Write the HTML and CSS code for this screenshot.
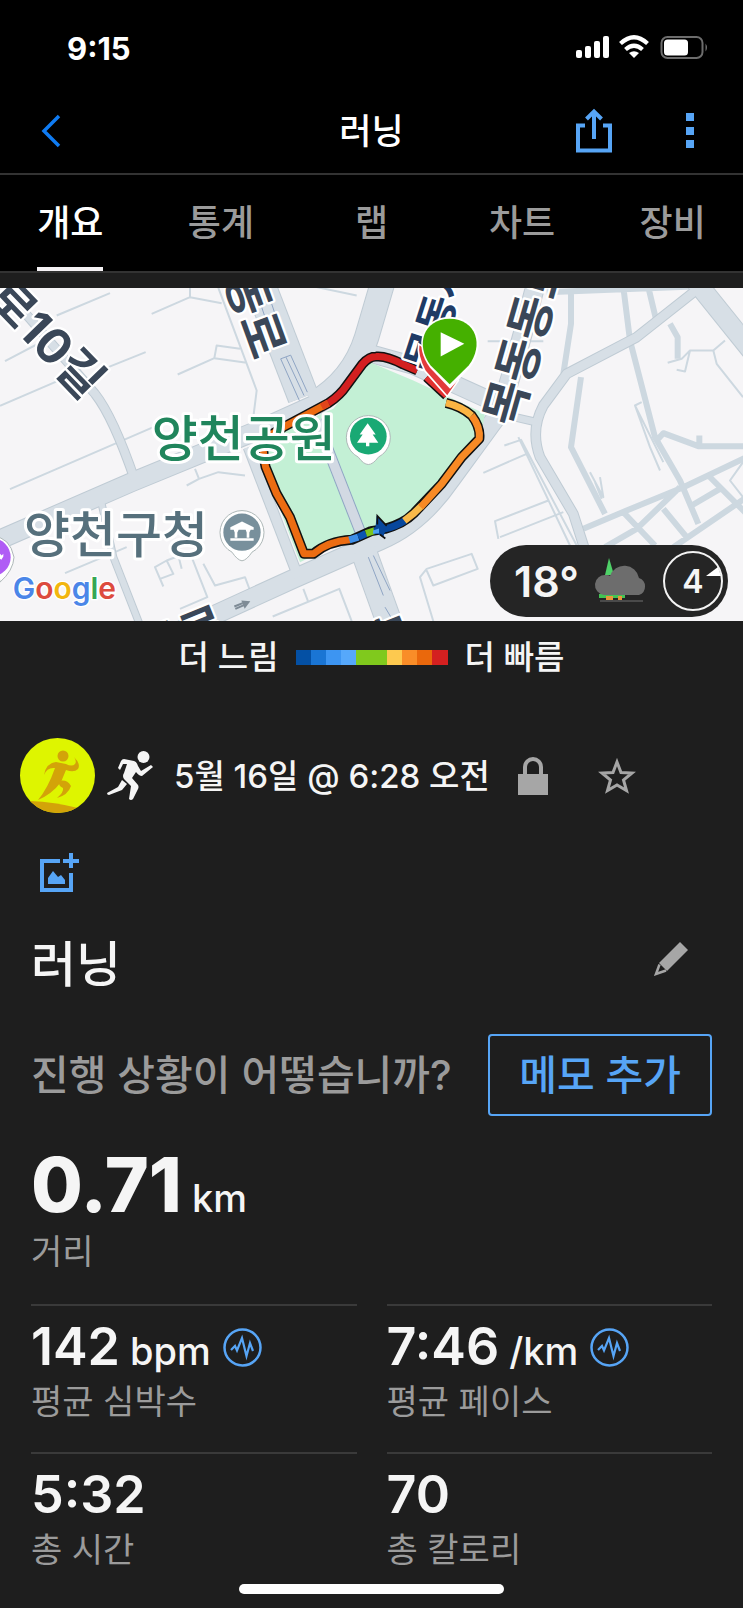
FILE: index.html
```html
<!DOCTYPE html>
<html lang="ko">
<head>
<meta charset="utf-8">
<meta name="viewport" content="width=device-width, initial-scale=1">
<title>러닝</title>
<link rel="stylesheet" href="styles.css">
</head>
<body>
<header class="top">
  <div class="status">
    <span class="clock">9:15</span>
    <svg class="status-icons" viewBox="0 0 134 26" width="134" height="26" aria-hidden="true">
      <g fill="#fff">
        <rect x="1" y="15" width="6" height="8" rx="2"/><rect x="10" y="11" width="6" height="12" rx="2"/>
        <rect x="19" y="6" width="6" height="17" rx="2"/><rect x="28" y="1" width="6" height="22" rx="2"/>
        <path d="M59 23l-5-5q5-3.500 10 0z"/>
      </g>
      <g fill="none" stroke="#fff" stroke-width="4.200">
        <path d="M45.500 8.500Q59-4 72.500 8.500"/><path d="M50.500 14.500q8.500-7.500 17 0"/>
      </g>
      <rect x="86.500" y="2" width="41" height="21" rx="6" fill="none" stroke="#6d6d6d" stroke-width="2"/>
      <rect x="89" y="4.500" width="24" height="16" rx="3.500" fill="#fff"/>
      <path d="M130.500 8.500q3 4 0 8z" fill="#6d6d6d"/>
    </svg>
  </div>
  <nav class="bar">
    <button class="icon-btn" aria-label="뒤로"><svg viewBox="0 0 22 34" width="22" height="34"><path d="M19 2L4 17l15 15" fill="none" stroke="#0f7bf2" stroke-width="3.500"/></svg></button>
    <h1 class="bar-title">러닝</h1>
    <div class="bar-actions">
      <button class="icon-btn" aria-label="공유"><svg viewBox="0 0 36 45" width="36" height="45"><g fill="none" stroke="#57a5f6" stroke-width="4"><path d="M9 17.500H2V42.500H34V17.500H27M18 31V3"/><path d="M10.500 11L18 3.500 25.500 11"/></g></svg></button>
      <button class="icon-btn" aria-label="더 보기"><svg viewBox="0 0 8 36" width="8" height="36"><path d="M0 0h8v8H0zM0 14h8v8H0zM0 27h8v8H0z" fill="#57a5f6"/></svg></button>
    </div>
  </nav>
  <nav class="tabs">
    <a class="tab is-active" href="#overview" aria-current="page">개요</a>
    <a class="tab" href="#stats">통계</a>
    <a class="tab" href="#laps">랩</a>
    <a class="tab" href="#charts">차트</a>
    <a class="tab" href="#gear">장비</a>
  </nav>
</header>

<main>
  <section class="map">
    <svg class="map-art" viewBox="0 22 2229 1000" preserveAspectRatio="xMidYMid slice" role="img" aria-label="양천공원 러닝 경로">
      <defs>
        <g id="roads">
          <path d="M-30 790L395 605 760 455 960 365" stroke-width="60"/>
          <path d="M775 0L910 350" stroke-width="96"/>
          <path d="M940 370Q1060 300 1100 170L1150 0" stroke-width="76"/>
          <path d="M1060 205L1240 255 1460 355" stroke-width="56"/>
          <path d="M520 1060L880 895 1140 780Q1260 730 1350 600L1500 395Q1560 200 1610 0" stroke-width="60"/>
          <path d="M745 500L895 890" stroke-width="34"/>
          <path d="M60 80L285 340Q340 410 405 600" stroke-width="30"/>
          <path d="M305 670L340 830 430 1060" stroke-width="24"/>
          <path d="M1090 810L1180 1060" stroke-width="80"/>
          <path d="M2085 0L2270 230" stroke-width="62"/>
          <path d="M2100 20L1910 170 1700 280 1630 375Q1590 450 1620 530L1720 700 1765 840" stroke-width="32"/>
          <path d="M1500 400L1610 425" stroke-width="26"/>
        </g>
      </defs>
      <rect x="0" y="22" width="2229" height="1000" fill="#f6f5f7"/>
      <g fill="none" stroke="#cdd8e0" stroke-width="6" stroke-linejoin="round">
        <path d="M170 105L330 38M15 242L190 150M0 376L200 290M295 272L437 215M30 626L460 440M455 100L570 50 665 68M570 22V50M533 282L643 233 740 247M643 233L650 195 720 205M655 22L770 330 760 410M560 615L597 595 655 575 735 585M585 565L597 595M195 878L380 800M490 918L465 860 500 840 520 880 480 895M500 840L540 825M545 865L535 825 575 830 622 950 540 985M610 850L645 915 735 890 750 930M818 1008L1018 925 1055 1022M910 925L925 965M880 5L1070 45"/>
        <path d="M1463 182H1630M1513 495L1563 478 1733 800M1450 577L1580 520M1495 775L1485 722 1645 660M1500 770L1690 695M1555 470L1710 795M1300 1022L1260 890 1280 865 1415 820 1433 865 1300 915 1280 870M1925 365L1905 375 1950 500 1980 570M1905 375L1990 545M2003 247L2045 235 2070 210H2140L2175 180M2030 268L2055 273 2070 210M2140 210L2150 250 2229 350M1770 575L1810 650 1800 590M1785 605L1805 655M2229 545L2190 600 2229 650"/>
      </g>
      <g fill="none" stroke="#cdd8e0" stroke-width="18" stroke-linejoin="round">
        <path d="M1640 35L2080 18M1713 35V130L1690 280M1743 290L1713 500 1815 700M1870 20L1890 180 1965 470 2040 600 2095 730M1945 20L1970 125M2010 130L2033 170V235M1970 480L1990 458 2095 497H2240M2098 465V495M1750 745L1880 690 2050 620 2240 530M2125 585L2240 700M1865 690L1965 795M1990 685L2060 770M1815 800L1910 745 2040 620M2075 675L2160 625M2020 800L2240 650"/>
      </g>
      <use href="#roads" fill="none" stroke="#bfcbd4" stroke-linejoin="round"/>
      <g fill="none" stroke="#d7dfe6" stroke-linejoin="round">
        <path d="M-30 790L395 605 760 455 960 365" stroke-width="54"/>
        <path d="M775 0L910 350" stroke-width="90"/>
        <path d="M940 370Q1060 300 1100 170L1150 0" stroke-width="70"/>
        <path d="M1060 205L1240 255 1460 355" stroke-width="50"/>
        <path d="M520 1060L880 895 1140 780Q1260 730 1350 600L1500 395Q1560 200 1610 0" stroke-width="54"/>
        <path d="M745 500L895 890" stroke-width="28"/>
        <path d="M60 80L285 340Q340 410 405 600" stroke-width="24"/>
        <path d="M305 670L340 830 430 1060" stroke-width="18"/>
        <path d="M1090 810L1180 1060" stroke-width="74"/>
        <path d="M2085 0L2270 230" stroke-width="56"/>
        <path d="M2100 20L1910 170 1700 280 1630 375Q1590 450 1620 530L1720 700 1765 840" stroke-width="26"/>
        <path d="M1500 400L1610 425" stroke-width="20"/>
      </g>
      <g fill="none" stroke="#8fa5c4" stroke-width="3">
        <path d="M785 80L795 110M815 70L825 100M842 235L898 360M842 235L872 224 922 335M858 230L912 345M1105 830L1150 945M1120 825L1170 930M1155 980L1180 1022"/>
      </g>
      <path d="M900 845L785 540 815 465 1000 385 1110 245 1240 300 1455 400 1440 480 1330 610 1240 700 1113 755 960 815z" fill="#c3f0d5"/>
      <path d="M950 420L1085 765" stroke="#8fa5c4" stroke-width="34"/>
      <path d="M950 420L1085 765" stroke="#d2d9e3" stroke-width="28"/>

      <g fill="none" stroke="#111" stroke-width="30" stroke-linejoin="round">
        <path d="M1252 270L1210 252Q1160 225 1128 228 1108 228 1088 250L1040 315Q1020 345 985 368L850 440 800 470Q782 500 797 560L830 640 870 710 912 820H940Q985 782 1055 778L1113 752 1155 745Q1210 730 1240 700L1325 610 1385 530 1438 475Q1442 440 1415 405 1385 378 1338 367"/>
        <path d="M1280 290L1340 345"/>
      </g>
      <g fill="none" stroke-width="21" stroke-linejoin="round">
        <path d="M1252 270L1210 252Q1160 225 1128 228 1108 228 1088 250L1040 315Q1020 345 985 368" stroke="#d32020"/>
        <path d="M985 368L850 440 800 470Q782 500 797 560L830 640 870 710 912 820H940Q985 782 1050 778" stroke="#ec6c12"/>
        <path d="M985 368L965 379" stroke="#e0451a"/>
        <path d="M1048 778L1075 770" stroke="#3d8ee8"/><path d="M1075 770L1098 759" stroke="#0a55b0"/>
        <path d="M1098 759L1125 750" stroke="#7cc520"/>
        <path d="M1122 751L1155 745Q1190 737 1215 720" stroke="#07479c"/>
        <path d="M1213 721L1240 700 1265 676" stroke="#f9b94a"/>
        <path d="M1262 680L1325 610 1385 530 1438 475Q1442 440 1415 405" stroke="#f88a25"/>
        <path d="M1415 405Q1385 378 1338 367" stroke="#fbb443"/>
        <path d="M1280 290L1340 345" stroke="#e23030"/>
      </g>
      <path d="M1130 705L1160 738 1150 770 1125 755z" fill="#07479c"/>
      <path d="M1132 732V706L1160 736M1140 762L1156 774" fill="none" stroke="#111" stroke-width="5"/>
      <path d="M1119 750l18-6v14l-18 2z" fill="#4aa0f5"/>

      <g class="road-name">
        <text transform="translate(-2 30) rotate(46)" x="-10" y="50">로10길</text>
        <text transform="translate(742 38) rotate(70)" x="-65" y="50">동로</text>
        <text transform="translate(1503 430) rotate(-74)" x="0" y="50">목동동로</text>
        <text transform="translate(1252 265) rotate(-72)" x="0" y="50" class="station">목동사</text>
        <text transform="translate(430 1140) rotate(-22)" x="0" y="30">동로</text>
        <text transform="translate(1130 1010) rotate(68)" x="0" y="50">목</text>
      </g>
      <text class="place park" x="455" y="530">양천공원</text>
      <text class="place office" x="72" y="816">양천구청</text>

      <path d="M1105 552q-14 0-30-22a66 66 0 1 1 60 0q-16 22-30 22z" fill="#fff" stroke="#aeb8b8" stroke-width="3"/>
      <circle cx="1105" cy="467" r="55" fill="#19a974"/>
      <path d="M1103 428l24 34h-9l17 25h-27v10h-10v-10h-27l17-25h-9z" fill="#fff"/>
      <path d="M726 841q-14-2-30-26a66 66 0 1 1 60 0q-16 24-30 26z" fill="#fff" stroke="#aeb8b8" stroke-width="3"/>
      <circle cx="726" cy="755" r="56" fill="#78909c"/>
      <path d="M726 723l35 17v8H691v-8zM701 748h15l-4 8v16h-8v-16zM737 748h15l-4 8v16h-8v-16zM691 773h70v8h-70z" fill="#fff"/>
      <path d="M-20 768Q30 770 42 830 40 870 0 905z" fill="#fff" stroke="#aeb8b8" stroke-width="3"/>
      <circle cx="-25" cy="830" r="57" fill="#b05cf5"/>
      <path d="M0 835V820l5 5 5-5V828l-6 10z" fill="#fff"/>
      <path d="M703 978L728 968M706 985L732 974" stroke="#7e8b96" stroke-width="6"/><path d="M724 960l27 2-17 23z" fill="#7e8b96"/>

      <path d="M1342 348L1275 272Q1250 225 1256 190L1330 240 1375 300z" fill="#e23b3b" stroke="#fff" stroke-width="5"/>
      <path d="M1350 325L1290 262C1240 196 1262 112 1349 109 1437 112 1460 196 1410 262z" fill="#fff"/>
      <path d="M1349 311L1292 255C1246 196 1268 116 1349 115 1430 116 1452 196 1406 255z" fill="#45b000"/>
      <path d="M1322 155L1393 190 1322 228z" fill="#fff"/>

      <text class="brand" x="38" y="956"><tspan fill="#4b86e8">G</tspan><tspan fill="#dd4b3e">o</tspan><tspan fill="#f2b60f">o</tspan><tspan fill="#4b86e8">g</tspan><tspan fill="#35a653">l</tspan><tspan fill="#dd4b3e">e</tspan></text>
    </svg>
    <div class="weather">
      <span class="degrees">18°</span>
      <svg viewBox="0 0 54 46" width="54" height="46" aria-hidden="true">
        <path d="M15 0l5 17h-9z" fill="#4fd168"/>
        <path d="M5 36h26v4H5z" fill="#42c353"/><path d="M12 38h7v4h-7zM24 38h4v4h-4z" fill="#e8963a"/>
        <path d="M6 43h43" stroke="#4a4a4a" stroke-width="2"/>
        <path d="M10 37a10 10 0 0 1 2-20q3 0 4 1a15 15 0 0 1 29 2a9 9 0 0 1 0 17z" fill="#6d6d6d"/>
      </svg>
      <svg class="wind" viewBox="0 0 60 60" width="60" height="60">
        <circle cx="30" cy="30" r="29" fill="none" stroke="#f3f3f3" stroke-width="2"/>
        <path d="M43 25L55 16 58 25z" fill="#fff"/>
        <text x="30" y="42" text-anchor="middle" class="wind-value">4</text>
      </svg>
    </div>
  </section>

  <div class="legend">
    <span>더 느림</span>
    <span class="scale"><i class="c1"></i><i class="c2"></i><i class="c3"></i><i class="c4"></i><i class="c5"></i><i class="c5"></i><i class="c6"></i><i class="c7"></i><i class="c8"></i><i class="c9"></i></span>
    <span>더 빠름</span>
  </div>

  <section class="meta">
    <svg class="avatar" viewBox="0 0 75 75" width="75" height="75" role="img" aria-label="프로필">
      <defs><clipPath id="disc"><circle cx="37.500" cy="37.500" r="37.500"/></clipPath></defs>
      <g clip-path="url(#disc)"><rect width="75" height="75" fill="#def500"/>
      <g fill="#d3a309"><path d="M10 63Q35 64 58 70L45 80H15z"/><circle cx="43" cy="18" r="5.500"/>
      <path d="M24 37Q26 25 36 24L46 26Q52 29 55 26 57 23 54 19 61 26 58 31 54 35 46 32L41 44Q32 56 18 62 28 50 35 30 27 29 24 37z"/>
      <path d="M39 43Q47 41 51 48 48 57 37 60 44 54 43 50 38 48 39 43z"/></g></g>
    </svg>
    <svg class="runner" viewBox="0 0 46 50" width="46" height="50" aria-hidden="true">
      <g fill="#f5f5f5"><circle cx="36.500" cy="6" r="6"/>
      <path d="M17 8L27 10Q30 11 31 15L34 20 44 14 46 16 35 25Q32 25 29 21L25 27 31 34Q32 36 31 38L26 48Q24 50 22 48L24 35 17 28Q15 25 17 22L20 13 16 13 13 19 11 17 14 10Q15 8 17 8z"/>
      <path d="M15 29L20 33 15 39 2 44Q0 44 0 42L11 36z"/></g>
    </svg>
    <time class="when">5월 16일 @ 6:28 오전</time>
    <svg class="lock" viewBox="0 0 30 38" width="30" height="38" role="img" aria-label="비공개"><path d="M0 17h30v21H0z" fill="#a6a6a6"/><path d="M7 18V10a8 8 0 0 1 16 0V18" fill="none" stroke="#a6a6a6" stroke-width="4"/></svg>
    <button class="icon-btn" aria-label="즐겨찾기"><svg viewBox="0 0 38 36" width="38" height="36"><path d="M19 4L23 14.500 34 15 25.500 22 28.500 32.500 19 27 9.500 32.500 12.500 22 4 15 15 14.500z" fill="none" stroke="#a6a6a6" stroke-width="3"/></svg></button>
  </section>

  <div class="photo">
    <button class="icon-btn" aria-label="사진 추가"><svg viewBox="0 0 39 39" width="39" height="39"><path d="M20 8H2V37H31V20" fill="none" stroke="#57a5f6" stroke-width="4"/><path d="M23 8H39M31 0V15" stroke="#57a5f6" stroke-width="4"/><path d="M8 31V25L13 18 18 24 21 22 25 27V31z" fill="#57a5f6"/></svg></button>
  </div>

  <section class="heading">
    <h2 class="title">러닝</h2>
    <button class="icon-btn edit" aria-label="이름 편집"><svg viewBox="0 0 34 34" width="34" height="34"><path d="M26 0L34 8 13 29 5 21z" fill="#a6a6a6"/><path d="M5.500 22.500L2 32 12 28.500" fill="none" stroke="#a6a6a6" stroke-width="2.500"/></svg></button>
  </section>

  <section class="note">
    <p class="prompt">진행 상황이 어떻습니까?</p>
    <button class="add-note">메모 추가</button>
  </section>

  <section class="distance">
    <p class="value big">0.71<span class="unit">km</span></p>
    <p class="label">거리</p>
  </section>

  <section class="stats">
    <div class="stat"><p class="value">142<span class="unit">bpm</span><svg class="pulse" viewBox="0 0 39 39" width="39" height="39"><use href="#wave"/></svg></p><p class="label">평균 심박수</p></div>
    <div class="stat"><p class="value">7:46<span class="unit">/km</span><svg class="pulse" viewBox="0 0 39 39" width="39" height="39"><g id="wave" fill="none" stroke="#57a5f6"><circle cx="19.500" cy="19.500" r="18" stroke-width="2.500"/><path d="M8 22L12 18 14 22.500 19 10 23.500 28 27 15 30 23" stroke-width="2.200"/></g></svg></p><p class="label">평균 페이스</p></div>
    <div class="stat"><p class="value">5:32</p><p class="label">총 시간</p></div>
    <div class="stat"><p class="value">70</p><p class="label">총 칼로리</p></div>
  </section>
</main>
<div class="home"></div>
</body>
</html>
```

FILE: styles.css
```css
* { box-sizing: border-box; }
body {
  margin: 0;
  background: #1e1e1e;
  color: #f5f5f5;
  font-family: Inter, "Noto Sans CJK KR", sans-serif;
  font-weight: 500;
  overflow-x: hidden;
}
h1, h2, p { margin: 0; font-weight: 500; }
svg { display: block; flex: none; }
button { font: inherit; color: inherit; background: none; border: 0; padding: 0; }
.icon-btn { display: block; flex: none; }

.top { background: #000; border-bottom: 2px solid #333; }
.status {
  display: flex;
  justify-content: space-between;
  align-items: center;
  height: 84px;
  padding: 12px 34px 0 67px;
}
.clock { font-size: 31px; font-weight: 700; color: #fff; }
.bar {
  display: grid;
  grid-template-columns: 1fr auto 1fr;
  align-items: center;
  height: 91px;
  padding: 4px 40px 0;
  border-bottom: 2px solid #333;
}
.bar-title { font-size: 35px; line-height: 44px; color: #fff; }
.bar-actions { display: flex; justify-content: flex-end; align-items: center; gap: 74px; padding-right: 9px; }
.tabs {
  display: grid;
  grid-template-columns: repeat(5, 1fr);
  margin: 0 -5px;
}
.tab {
  justify-self: center;
  height: 96px;
  padding: 25px 0 21px;
  border-bottom: 4px solid transparent;
  color: #9b9b9b;
  font-size: 36px;
  line-height: 46px;
  text-decoration: none;
}
.tab.is-active { color: #fff; border-color: #f5f2f5; }

.map { position: relative; margin-top: 15px; }
.map-art { width: 100%; height: auto; aspect-ratio: 743 / 333; }
.road-name { font-size: 144px; font-weight: 700; fill: #3a4758; stroke: #fff; stroke-width: 14px; stroke-linejoin: round; paint-order: stroke; }
.station { font-size: 125px; fill: #1f3b66; }
.place { font-size: 150px; font-weight: 500; stroke: #fff; stroke-width: 18px; stroke-linejoin: round; paint-order: stroke; }
.park { fill: #20855c; }
.office { fill: #56707c; }
.brand { font-size: 90px; font-weight: 600; stroke: #fff; stroke-width: 8px; paint-order: stroke; }
.weather {
  position: absolute;
  right: 15px;
  bottom: 4px;
  display: flex;
  align-items: center;
  gap: 15px;
  height: 72px;
  padding: 0 5px 0 24px;
  border-radius: 36px;
  background: #252525;
}
.degrees { font-size: 43px; line-height: 52px; font-weight: 600; }
.wind-value { font-size: 32px; font-weight: 600; fill: #f5f5f5; }

.legend {
  display: flex;
  justify-content: center;
  align-items: center;
  gap: 17px;
  padding: 14px 0;
  font-size: 33px;
  line-height: 44px;
}
.scale { display: flex; width: 152px; height: 15px; }
.scale i { flex: 1; }
.c1 { background: #0450a4; }
.c2 { background: #1a75d4; }
.c3 { background: #3d95f2; }
.c4 { background: #56a8fb; }
.c5 { background: #80c91d; }
.c6 { background: #fdc94f; }
.c7 { background: #f98d28; }
.c8 { background: #ea680c; }
.c9 { background: #d42020; }

.meta {
  display: flex;
  align-items: center;
  margin-top: 45px;
  padding: 0 20px;
}
.runner { margin-left: 12px; }
.when { margin-left: 21px; font-size: 33px; line-height: 44px; }
.lock { margin: 0 50px 0 28px; }

.photo { padding: 40px 40px 0; }
.heading {
  display: flex;
  justify-content: space-between;
  align-items: center;
  margin-top: 41px;
  padding: 0 55px 0 31px;
}
.title { font-size: 49px; line-height: 64px; }
.edit { margin-bottom: 12px; }
.note {
  display: flex;
  justify-content: space-between;
  align-items: center;
  margin-top: 37px;
  padding: 0 31px;
}
.prompt { color: #9b9b9b; font-size: 41px; line-height: 52px; }
.add-note {
  padding: 13px 29px;
  border: 2px solid #57a5f6;
  border-radius: 4px;
  color: #57a5f6;
  font-size: 41px;
  line-height: 52px;
}
.distance { padding: 31px 31px 30px; }
.value { display: flex; align-items: baseline; font-size: 52px; line-height: 52px; font-weight: 600; }
.big { font-size: 75px; line-height: 76px; font-weight: 800; }
.unit { margin-left: 10px; font-size: 38px; line-height: 38px; font-weight: 500; }
.label { margin-top: 7px; color: #9b9b9b; font-size: 34px; line-height: 44px; font-weight: 400; }
.stats {
  display: grid;
  grid-template-columns: 1fr 1fr;
  column-gap: 30px;
  padding: 0 31px;
}
.stat { padding: 15px 0 28px; border-top: 2px solid #3a3a3a; }
.pulse { align-self: center; margin-left: 12px; }
.home { width: 265px; height: 10px; margin: -16px auto 15px; border-radius: 5px; background: #fff; }
```
